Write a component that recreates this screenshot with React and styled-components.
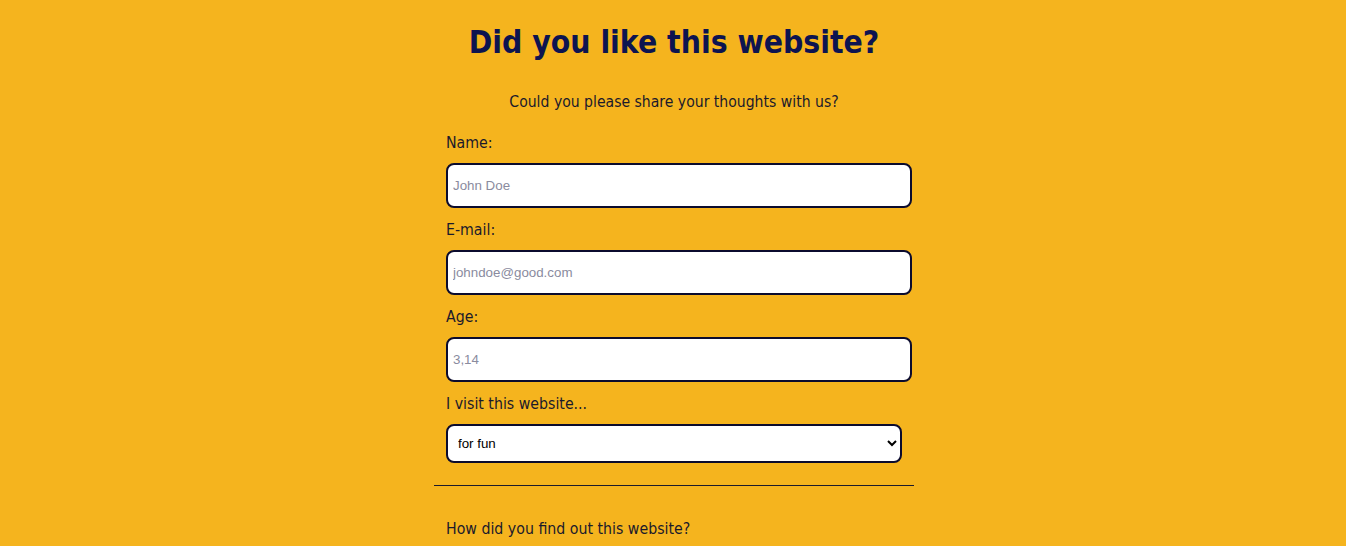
import React from "react";
import styled, { createGlobalStyle } from "styled-components";

const GlobalStyle = createGlobalStyle`
  body {
    margin: 0;
    background-color: #f5b41e;
    font-family: "DejaVu Sans", Verdana, sans-serif;
    font-stretch: condensed;
    color: #1b1a2b;
  }
`;

const Page = styled.div`
  min-height: 546px;
  display: flex;
  flex-direction: column;
  align-items: center;
  padding-left: 2px;
`;

const Title = styled.h1`
  margin: 22px 0 0;
  font-size: 31.6px;
  line-height: 40px;
  font-weight: bold;
  color: #0d1450;
  text-align: center;
`;

const Subtitle = styled.p`
  margin: 30px 0 0;
  font-size: 15.6px;
  line-height: 20px;
  text-align: center;
`;

const Form = styled.form`
  width: 480px;
  margin-top: 21px;
  display: flex;
  flex-direction: column;
`;

const Field = styled.div`
  padding: 0 12px;
  display: flex;
  flex-direction: column;
  gap: 10px;
  margin-bottom: ${(props) => props.last ? "22px" : "12px"};
`;

const Label = styled.label`
  font-size: 15.75px;
  line-height: 20px;
`;

const Input = styled.input`
  box-sizing: border-box;
  width: 466px;
  height: 45px;
  padding: 0 5px;
  border: 2px solid #0b0b2e;
  border-radius: 8px;
  background: #fff;
  font-family: "Liberation Sans", Arial, sans-serif;
  font-stretch: normal;
  font-size: 13.33px;
  outline: none;
  &::placeholder {
    color: #8a8b9e;
  }
`;

const Select = styled.select`
  box-sizing: border-box;
  width: 456px;
  height: 39px;
  padding: 0 6px;
  border: 2px solid #0b0b2e;
  border-radius: 8px;
  background: #fff;
  color: #000;
  font-family: "Liberation Sans", Arial, sans-serif;
  font-stretch: normal;
  font-size: 13.33px;
`;

const Divider = styled.hr`
  width: 480px;
  margin: 0;
  border: none;
  border-top: 1px solid #1b1a2b;
`;

const Question = styled.p`
  margin: 33px 12px 0;
  font-size: 15.75px;
  line-height: 20px;
`;

const fields = [
  { id: "name", label: "Name:", type: "text", placeholder: "John Doe" },
  { id: "email", label: "E-mail:", type: "email", placeholder: "johndoe@good.com" },
  { id: "age", label: "Age:", type: "number", placeholder: "3,14" },
];

export default function App() {
  return (
    <Page>
      <GlobalStyle />
      <Title>Did you like this website?</Title>
      <Subtitle>Could you please share your thoughts with us?</Subtitle>
      <Form onSubmit={(e) => e.preventDefault()}>
        {fields.map((f) => (
          <Field key={f.id}>
            <Label htmlFor={f.id}>{f.label}</Label>
            <Input id={f.id} type={f.type} placeholder={f.placeholder} />
          </Field>
        ))}
        <Field last>
          <Label htmlFor="reason">I visit this website...</Label>
          <Select id="reason" defaultValue="fun">
            <option value="fun">for fun</option>
            <option value="work">for work</option>
            <option value="study">for study</option>
          </Select>
        </Field>
        <Divider />
        <Question>How did you find out this website?</Question>
      </Form>
    </Page>
  );
}
